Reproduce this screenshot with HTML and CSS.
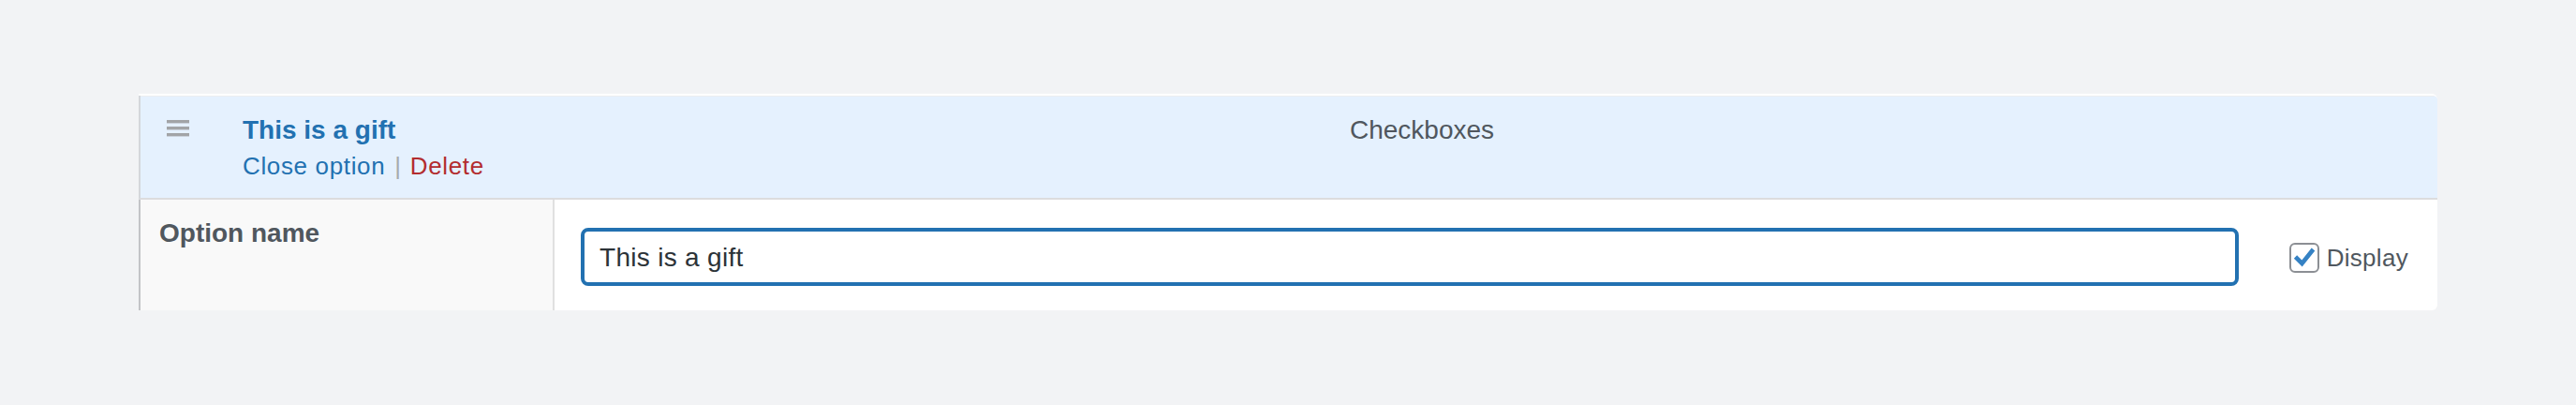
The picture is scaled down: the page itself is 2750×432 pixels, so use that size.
FILE: index.html
```html
<!DOCTYPE html>
<html lang="en">
<head>
<meta charset="utf-8">
<title>Product option</title>
<link rel="stylesheet" href="styles.css">
</head>
<body>
<div class="page">
  <div class="option">
    <div class="option-head">
      <span class="handle">
        <svg width="24" height="30" viewBox="0 0 24 30" aria-hidden="true">
          <rect x="0" y="9" width="24" height="3.4" fill="#a2a4a7"/>
          <rect x="0" y="16" width="24" height="3.4" fill="#a2a4a7"/>
          <rect x="0" y="23" width="24" height="3.4" fill="#a2a4a7"/>
        </svg>
      </span>
      <div class="title-block">
        <div class="title">This is a gift</div>
        <div class="actions"><a class="close-link">Close option</a><span class="sep">|</span><a class="delete-link">Delete</a></div>
      </div>
      <div class="type">Checkboxes</div>
    </div>
    <div class="option-body">
      <div class="label-cell">Option name</div>
      <div class="field-cell">
        <input class="name-input" type="text" value="This is a gift">
        <label class="display">
          <span class="checkbox">
            <svg width="28" height="28" viewBox="0 0 28 28" aria-hidden="true">
              <polyline points="4.5,13 11.5,20 23.5,5" fill="none" stroke="#3582c4" stroke-width="4.6" stroke-linejoin="miter" stroke-linecap="butt"/>
            </svg>
          </span>
          <span class="display-text">Display</span>
        </label>
      </div>
    </div>
  </div>
</div>
</body>
</html>
```
FILE: styles.css
```css
* { box-sizing: border-box; }

html, body {
  margin: 0;
  padding: 0;
  background: #f2f3f5;
  font-family: "Liberation Sans", Arial, sans-serif;
}

.page {
  padding: 100px 148px 0 148px;
}

.option {
  border-top: 2px solid #ffffff;
  border-radius: 0 6px 6px 0;
  overflow: hidden;
}

.option-head {
  display: grid;
  grid-template-columns: 24px 1124px 1fr;
  column-gap: 57px;
  align-items: start;
  background: #e5f1fe;
  border-left: 2px solid #d4d7db;
  border-bottom: 2px solid #dcdcde;
  box-shadow: inset 0 1px 0 #eceef0;
  padding: 17px 0 14px 28px;
  line-height: 39px;
}

.handle {
  display: block;
  height: 30px;
}

.handle svg { display: block; }

.title {
  font-size: 28px;
  font-weight: 700;
  color: #2271b1;
}

.actions {
  font-size: 26px;
  letter-spacing: 0.65px;
}

.close-link { color: #2271b1; }

.sep {
  color: #a7aaad;
  margin: 0 9px 0 10px;
}

.delete-link { color: #b32d2e; }

.type {
  font-size: 28px;
  color: #50575e;
  padding-left: 1px;
}

.option-body {
  display: flex;
  border-left: 2px solid #c3c4c7;
  background: #ffffff;
}

.label-cell {
  width: 442px;
  flex: none;
  background: #f9f9f9;
  border-right: 2px solid #e0e0e0;
  padding: 16px 20px;
  font-size: 28px;
  line-height: 39px;
  font-weight: 700;
  color: #50575e;
}

.field-cell {
  flex: 1;
  display: flex;
  align-items: center;
  gap: 54px;
  padding: 30px 31px 26px 28px;
}

.name-input {
  flex: 1;
  min-width: 0;
  height: 62px;
  border: 4px solid #2271b1;
  border-radius: 8px;
  padding: 1px 16px 0 16px;
  font-family: "Liberation Sans", Arial, sans-serif;
  font-size: 28px;
  letter-spacing: 0.3px;
  color: #2c3338;
  background: #ffffff;
  outline: none;
}

.display {
  display: flex;
  align-items: center;
  gap: 8px;
  padding-top: 1px;
}

.checkbox {
  width: 32px;
  height: 32px;
  border: 2px solid #8c8f94;
  border-radius: 6px;
  background: #ffffff;
  display: flex;
  align-items: center;
  justify-content: center;
}

.checkbox svg { display: block; }

.display-text {
  font-size: 26px;
  color: #50575e;
  letter-spacing: 0.3px;
  padding-top: 2px;
}
```
